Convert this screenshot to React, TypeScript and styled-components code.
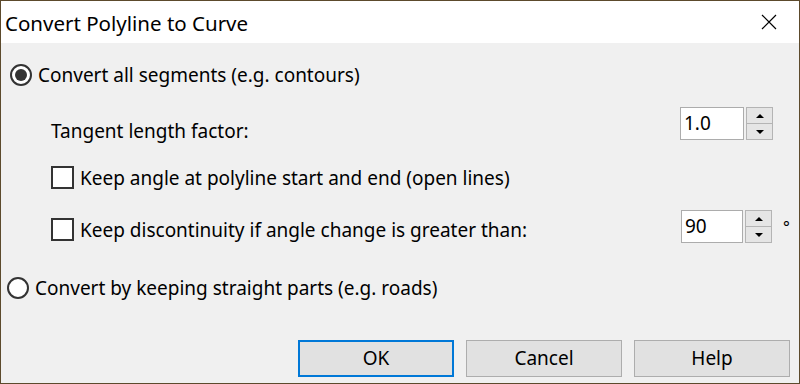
import React from "react";
import styled, { createGlobalStyle } from "styled-components";

const Global = createGlobalStyle`
  html, body { margin: 0; padding: 0; background: #6e5c3c; }
  * { box-sizing: border-box; }
`;

const FONT = `"Noto Sans", "Open Sans", sans-serif`;

const Window = styled.div`
  width: 800px;
  height: 384px;
  border: 1px solid #5c4a2c;
  display: flex;
  flex-direction: column;
  font-family: ${FONT};
  color: #000;
  background: #f0f0f0;
`;

const TitleBar = styled.div`
  height: 42px;
  background: #fff;
  display: flex;
  align-items: center;
  justify-content: space-between;
  padding-left: 4px;
`;

const Title = styled.div`
  font-size: 20.5px;
  line-height: 26px;
  padding-top: 1px;
`;

const CloseButton = styled.div`
  width: 60px;
  height: 42px;
  display: flex;
  align-items: center;
  justify-content: center;
`;

const Body = styled.div`
  flex: 1;
  display: flex;
  flex-direction: column;
  font-size: 19px;
`;

const RadioRow = styled.label<{ $top: number; $left: number }>`
  display: flex;
  align-items: center;
  gap: 6px;
  height: 32px;
  margin-top: ${(p) => p.$top}px;
  padding-left: ${(p) => p.$left}px;
`;

const RadioCircle = styled.span<{ $checked?: boolean }>`
  width: 22px;
  height: 22px;
  border-radius: 50%;
  border: 2px solid #333;
  background: #fff;
  display: flex;
  align-items: center;
  justify-content: center;
  &::after {
    content: "";
    display: ${(p) => (p.$checked ? "block" : "none")};
    width: 12px;
    height: 12px;
    border-radius: 50%;
    background: #333;
  }
`;

const Section = styled.div`
  display: flex;
  flex-direction: column;
  padding-left: 50px;
`;

const FieldRow = styled.div<{ $top: number; $right: number }>`
  display: flex;
  align-items: flex-start;
  margin-top: ${(p) => p.$top}px;
  padding-right: ${(p) => p.$right}px;
`;

const Label = styled.span<{ $pad: number }>`
  flex: 1;
  padding-top: ${(p) => p.$pad}px;
  line-height: 24px;
  white-space: nowrap;
`;

const CheckRow = styled.label<{ $top: number; $boxTop: number }>`
  display: flex;
  align-items: flex-start;
  margin-top: ${(p) => p.$top}px;
  min-height: 23px;
  & > span:first-child {
    margin-top: ${(p) => p.$boxTop}px;
  }
`;

const CheckBox = styled.span`
  width: 23px;
  height: 23px;
  flex: none;
  border: 2px solid #333;
  background: #fff;
  margin-right: 6px;
`;

const CheckText = styled.span<{ $pad: number }>`
  line-height: 24px;
  padding-top: ${(p) => p.$pad}px;
  white-space: nowrap;
  flex: 1;
`;

const Spin = styled.div<{ $inputWidth: number }>`
  display: flex;
  gap: 2px;
  height: 33px;
  flex: none;
  & > div:first-child {
    width: ${(p) => p.$inputWidth}px;
  }
`;

const SpinInput = styled.div`
  height: 33px;
  border: 1px solid #acacac;
  background: #fff;
  padding-left: 3px;
  line-height: 31px;
`;

const SpinButtons = styled.div`
  width: 27px;
  display: flex;
  flex-direction: column;
`;

const SpinButton = styled.div<{ $up?: boolean }>`
  flex: 1;
  background: #e5e5e5;
  border: 1px solid #b4b4b4;
  ${(p) => (p.$up ? "border-bottom: none;" : "")}
  display: flex;
  align-items: center;
  justify-content: center;
  &::after {
    content: "";
    width: 0;
    height: 0;
    border-left: 4px solid transparent;
    border-right: 4px solid transparent;
    ${(p) =>
      p.$up ? "border-bottom: 4px solid #000;" : "border-top: 4px solid #000;"}
  }
`;

const Degree = styled.span`
  width: 27px;
  flex: none;
  padding-left: 11px;
  padding-top: 5px;
  line-height: 24px;
  font-size: 16px;
`;

const ButtonRow = styled.div`
  margin-top: auto;
  margin-bottom: 6px;
  display: flex;
  justify-content: flex-end;
  gap: 12px;
  padding-right: 9px;
`;

const Button = styled.button<{ $default?: boolean }>`
  width: 156px;
  height: 37px;
  font-family: ${FONT};
  font-size: 19px;
  color: #000;
  background: #e1e1e1;
  border: ${(p) => (p.$default ? "2px solid #0078d7" : "1px solid #adadad")};
  padding: 0;
  line-height: 1;
`;

const CloseIcon = () => (
  <svg width="16" height="16" viewBox="0 0 16 16">
    <path d="M1 1 L15 15 M15 1 L1 15" stroke="#000" strokeWidth="1.2" fill="none" />
  </svg>
);

const SpinBox = ({ value, inputWidth }: { value: string; inputWidth: number }) => (
  <Spin $inputWidth={inputWidth}>
    <SpinInput>{value}</SpinInput>
    <SpinButtons>
      <SpinButton $up />
      <SpinButton />
    </SpinButtons>
  </Spin>
);

export default function App() {
  return (
    <>
      <Global />
      <Window>
        <TitleBar>
          <Title>Convert Polyline to Curve</Title>
          <CloseButton>
            <CloseIcon />
          </CloseButton>
        </TitleBar>
        <Body>
          <RadioRow $top={16} $left={9}>
            <RadioCircle $checked />
            <span>Convert all segments (e.g. contours)</span>
          </RadioRow>
          <Section>
            <FieldRow $top={16} $right={26}>
              <Label $pad={12}>Tangent length factor:</Label>
              <SpinBox value="1.0" inputWidth={64} />
            </FieldRow>
            <CheckRow $top={23} $boxTop={0}>
              <CheckBox />
              <CheckText $pad={0}>Keep angle at polyline start and end (open lines)</CheckText>
            </CheckRow>
            <CheckRow $top={20} $boxTop={8}>
              <CheckBox />
              <CheckText $pad={8}>Keep discontinuity if angle change is greater than:</CheckText>
              <SpinBox value="90" inputWidth={62} />
              <Degree>°</Degree>
            </CheckRow>
          </Section>
          <RadioRow $top={29} $left={6}>
            <RadioCircle />
            <span>Convert by keeping straight parts (e.g. roads)</span>
          </RadioRow>
          <ButtonRow>
            <Button $default>OK</Button>
            <Button>Cancel</Button>
            <Button>Help</Button>
          </ButtonRow>
        </Body>
      </Window>
    </>
  );
}
